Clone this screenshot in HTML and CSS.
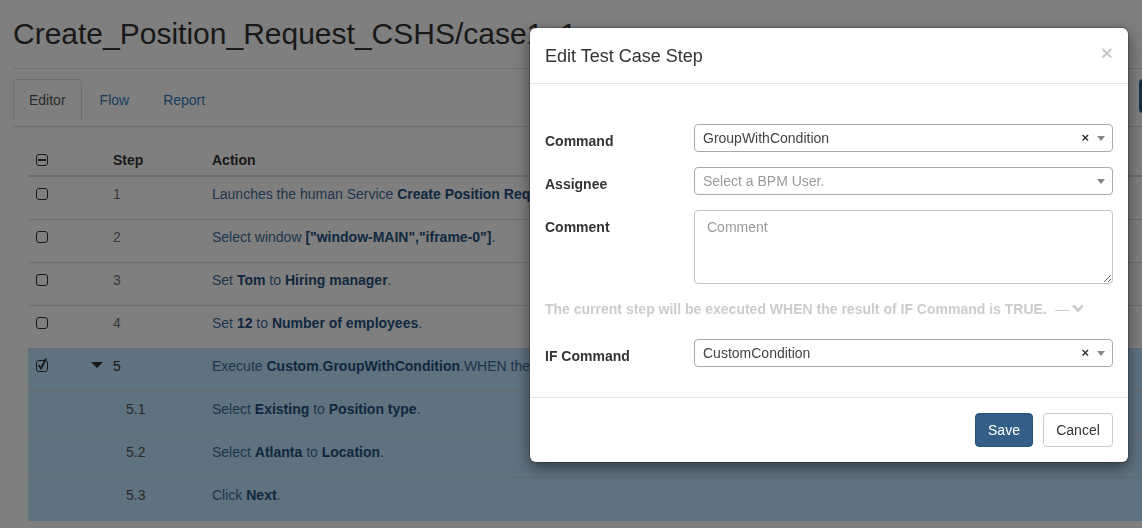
FILE: index.html
```html
<!DOCTYPE html>
<html>
<head>
<meta charset="utf-8">
<link rel="stylesheet" href="styles.css">
</head>
<body>
<div class="page">
  <h1 class="title">Create_Position_Request_CSHS/case1_1</h1>
  <div class="rule"></div>
  <div class="tabbar">
    <ul class="tabs">
      <li class="tab active">Editor</li>
      <li class="tab">Flow</li>
      <li class="tab">Report</li>
    </ul>
    <button class="run-btn" aria-label="Run"><svg viewBox="0 0 10 12" width="10" height="12"><path d="M1 1 L9 6 L1 11 Z" fill="#fff"/></svg></button>
  </div>
  <div class="tabline"></div>
  <table class="steps">
    <colgroup><col class="c-check"><col class="c-step"><col></colgroup>
    <thead>
      <tr><th><span class="cb cb-minus"></span></th><th>Step</th><th>Action</th></tr>
    </thead>
    <tbody>
      <tr><td><span class="cb"></span></td><td class="num">1</td><td class="act">Launches the human Service <b>Create Position Request_CSHS</b>.</td></tr>
      <tr><td><span class="cb"></span></td><td class="num">2</td><td class="act">Select window <b>["window-MAIN","iframe-0"]</b>.</td></tr>
      <tr><td><span class="cb"></span></td><td class="num">3</td><td class="act">Set <b>Tom</b> to <b>Hiring manager</b>.</td></tr>
      <tr><td><span class="cb"></span></td><td class="num">4</td><td class="act">Set <b>12</b> to <b>Number of employees</b>.</td></tr>
      <tr class="sel"><td><span class="cb cb-checked"><svg viewBox="0 0 12 14" width="12" height="14"><path d="M2.5 8 L5 11.5 L10 1.5" fill="none" stroke="#333" stroke-width="1.8"/></svg></span></td><td class="num num-dark"><span class="caret"></span>5</td><td class="act">Execute <b>Custom</b>.<b>GroupWithCondition</b>.WHEN the result of <b>CustomCondition</b> is TRUE.</td></tr>
      <tr class="sel"><td></td><td class="num sub">5.1</td><td class="act">Select <b>Existing</b> to <b>Position type</b>.</td></tr>
      <tr class="sel"><td></td><td class="num sub">5.2</td><td class="act">Select <b>Atlanta</b> to <b>Location</b>.</td></tr>
      <tr class="sel"><td></td><td class="num sub">5.3</td><td class="act">Click <b>Next</b>.</td></tr>
    </tbody>
  </table>
</div>

<div class="backdrop"></div>
<div class="modal">
  <div class="modal-header">
    <span class="modal-title">Edit Test Case Step</span>
    <span class="close">×</span>
  </div>
  <div class="modal-body">
    <div class="form-group">
      <label class="lbl">Command</label>
      <div class="select"><span class="sel-text">GroupWithCondition</span><span class="clear">×</span><span class="arrow"></span></div>
    </div>
    <div class="form-group">
      <label class="lbl">Assignee</label>
      <div class="select"><span class="sel-text placeholder">Select a BPM User.</span><span class="arrow"></span></div>
    </div>
    <div class="form-group">
      <label class="lbl">Comment</label>
      <textarea class="comment" placeholder="Comment"></textarea>
    </div>
    <div class="note">The current step will be executed WHEN the result of IF Command is TRUE. <span class="dash">—</span><svg class="chev" viewBox="0 0 14 10" width="14" height="10"><path d="M1 2.2 L3 0.5 L7 4.5 L11 0.5 L13 2.2 L7 8.5 Z" fill="#cccccc"/></svg></div>
    <div class="form-group">
      <label class="lbl">IF Command</label>
      <div class="select"><span class="sel-text">CustomCondition</span><span class="clear">×</span><span class="arrow"></span></div>
    </div>
  </div>
  <div class="modal-footer">
    <button class="btn btn-save">Save</button>
    <button class="btn btn-cancel">Cancel</button>
  </div>
</div>
</body>
</html>
```

FILE: styles.css
```css
* { box-sizing: border-box; }
html, body { margin: 0; padding: 0; }
body {
  font-family: "Liberation Sans", Arial, sans-serif;
  font-size: 14px;
  line-height: 20px;
  color: #333;
  background: #fff;
  overflow: hidden;
  width: 1142px;
  height: 528px;
  position: relative;
}
.page {
  width: 1240px;
  padding: 0 13px;
}
.title {
  font-size: 30px;
  font-weight: 400;
  line-height: 33px;
  margin: 17px 0 0;
  color: #333;
}
.rule {
  height: 1px;
  background: #e2e2e2;
  margin-top: 18px;
}
.tabbar {
  display: flex;
  align-items: flex-start;
  margin-top: 10px;
}
.tabs {
  display: flex;
  list-style: none;
  margin: 0;
  padding: 0;
}
.tab {
  padding: 10px 15px;
  line-height: 20px;
  border: 1px solid transparent;
  border-bottom: none;
  border-radius: 4px 4px 0 0;
  margin-right: 2px;
  color: #337ab7;
  height: 41px;
}
.tab.active {
  color: #555;
  border-color: #ddd;
}
.run-btn {
  margin-left: auto;
  width: 88px;
  height: 34px;
  border: none;
  border-radius: 4px;
  background: #335f87;
  display: flex;
  align-items: center;
  justify-content: center;
}
.tabline {
  height: 1px;
  background: #ddd;
  margin-top: 6px;
}
.steps {
  margin: 17px 0 0 15px;
  width: calc(100% - 15px);
  border-collapse: collapse;
  table-layout: fixed;
}
.c-check { width: 77px; }
.c-step { width: 99px; }
.steps th {
  text-align: left;
  font-weight: 700;
  padding: 6px 8px 4px;
  border-bottom: 2px solid #ddd;
  vertical-align: top;
  height: 32px;
}
.steps td {
  padding: 7px 8px 15px;
  border-top: 1px solid #ddd;
  vertical-align: top;
  height: 43px;
  white-space: nowrap;
}
.steps td.act { overflow: hidden; }
.steps tbody tr:first-child td { border-top: none; }
.steps tr.sel td { background: #bee4ff; border-top-color: #c9d6df; }
.num { color: #6f6f6f; position: relative; }
.num-dark { color: #333; }
.num.sub { padding-left: 21px; color: #555; }
.act { color: #3d6d9a; }
.act b { color: #22507f; }
.caret {
  position: absolute;
  left: -14px;
  top: 13px;
  width: 0;
  height: 0;
  border-left: 6.5px solid transparent;
  border-right: 6.5px solid transparent;
  border-top: 6px solid #333;
}
.cb {
  display: inline-block;
  width: 12px;
  height: 12px;
  border: 1.5px solid #333;
  border-radius: 3px;
  position: relative;
  vertical-align: middle;
  margin-top: -2px;
}
.steps th .cb { margin-top: 0; vertical-align: -1px; }
.cb-minus::after {
  content: "";
  position: absolute;
  left: 1px;
  right: 1px;
  top: 4px;
  height: 1.5px;
  background: #333;
}
.cb-checked svg {
  position: absolute;
  left: -1px;
  top: -4px;
}
.backdrop {
  position: fixed;
  inset: 0;
  background: rgba(0, 0, 0, 0.5);
}
.modal {
  position: absolute;
  left: 530px;
  top: 28px;
  width: 598px;
  background: #fff;
  border-radius: 6px;
  box-shadow: 0 0 0 1px rgba(0,0,0,.2), 0 5px 15px rgba(0, 0, 0, 0.5);
}
.modal-header {
  display: flex;
  justify-content: space-between;
  align-items: flex-start;
  padding: 15px 15px 14px;
  border-bottom: 1px solid #e5e5e5;
}
.modal-title {
  font-size: 18px;
  line-height: 26px;
  color: #333;
}
.close {
  font-size: 21px;
  font-weight: 700;
  line-height: 20px;
  color: #000;
  opacity: 0.2;
  margin-right: 0;
}
.modal-body {
  padding: 40px 15px 15px;
}
.form-group {
  display: grid;
  grid-template-columns: 134px 1fr;
  column-gap: 15px;
  margin-bottom: 15px;
}
.lbl {
  font-weight: 700;
  padding-top: 7px;
  line-height: 20px;
}
.select {
  display: flex;
  align-items: center;
  height: 28px;
  border: 1px solid #aaa;
  border-radius: 4px;
  padding: 0 7px 0 8px;
  color: #444;
}
.sel-text { flex: 1; line-height: 26px; }
.placeholder { color: #999; }
.clear {
  font-weight: 700;
  font-size: 13px;
  color: #333;
  margin-right: 8px;
}
.arrow {
  width: 0;
  height: 0;
  border-left: 4px solid transparent;
  border-right: 4px solid transparent;
  border-top: 5px solid #888;
  margin-top: 1px;
}
.comment {
  display: block;
  width: 100%;
  height: 74px;
  border: 1px solid #c4c4c4;
  border-radius: 4px;
  padding: 6px 12px;
  font: inherit;
  line-height: 20px;
  color: #555;
  resize: vertical;
}
.comment::placeholder { color: #999; }
.note {
  font-weight: 700;
  color: #ccc;
  line-height: 20px;
  margin-bottom: 20px;
  display: flex;
  align-items: center;
  white-space: pre;
}
.dash { font-weight: 400; margin-left: 4px; margin-right: 2px; }
.chev { margin-top: -1px; }
.modal-footer {
  display: flex;
  justify-content: flex-end;
  gap: 10px;
  padding: 15px;
  border-top: 1px solid #e5e5e5;
}
.btn {
  font: inherit;
  height: 34px;
  padding: 6px 12px;
  border-radius: 4px;
  line-height: 20px;
}
.btn-save {
  background: #335f87;
  border: 1px solid #2c5275;
  color: #fff;
  width: 58px;
}
.btn-cancel {
  background: #fff;
  border: 1px solid #ccc;
  color: #333;
  width: 70px;
}
```
